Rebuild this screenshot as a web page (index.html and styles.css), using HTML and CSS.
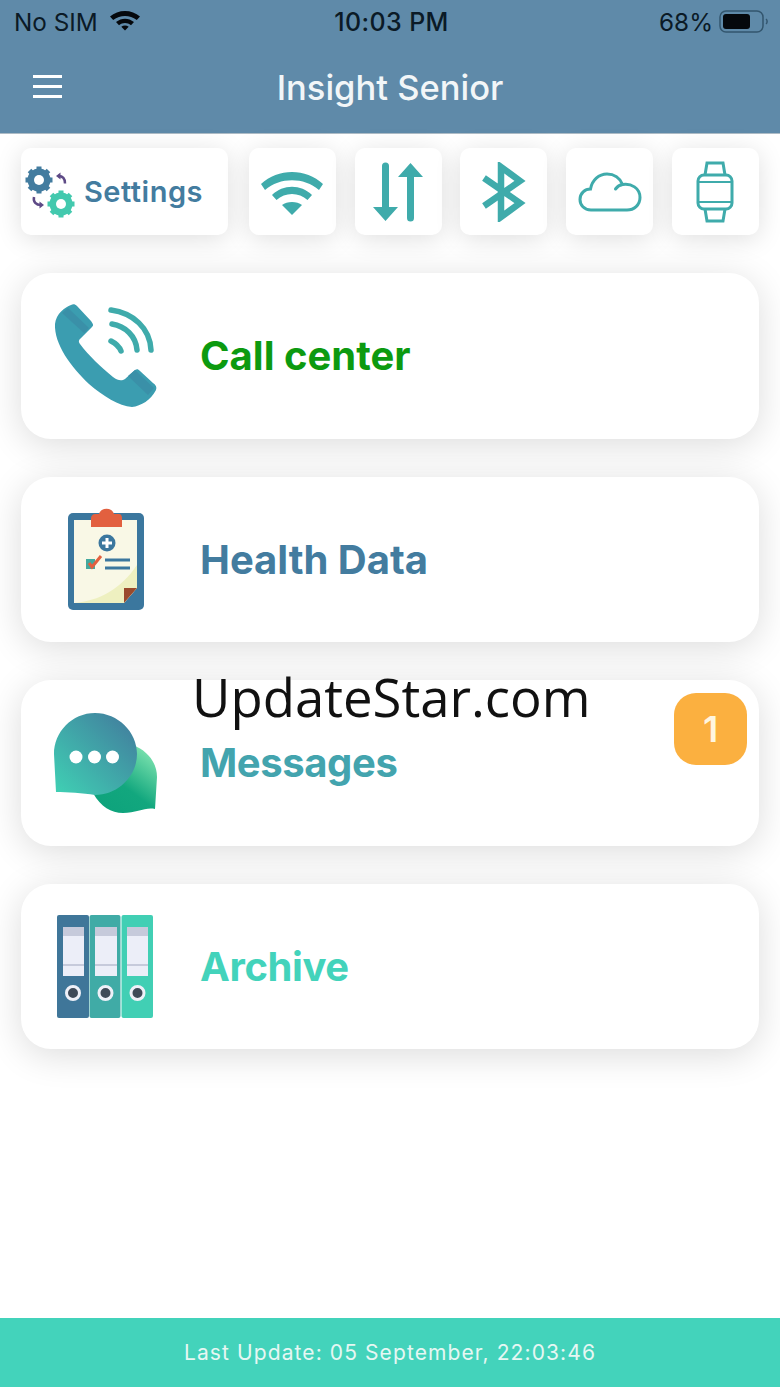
FILE: index.html
```html
<!DOCTYPE html>
<html lang="en">
<head>
<meta charset="utf-8">
<title>Insight Senior</title>
<link rel="stylesheet" href="styles.css">
</head>
<body>
<div class="screen">
  <header class="top">
    <div class="status">
      <div class="status-left">
        <span>No SIM</span>
        <svg class="sb-wifi" viewBox="0 0 32 24"><path d="M1 8.500C9 1 23 1 31 8.500L27.800 12C20.500 6.500 11.500 6.500 4.200 12Z"/><path d="M7 14C12.500 9.500 19.500 9.500 25 14L22 17.200C18.300 14.300 13.700 14.300 10 17.200Z"/><path d="M12.300 18.700C14.500 17.200 17.500 17.200 19.700 18.700L16 22.500Z"/></svg>
      </div>
      <div class="status-time">10:03 PM</div>
      <div class="status-right">
        <span>68%</span>
        <svg class="sb-batt" viewBox="0 0 50 26"><rect x="1" y="2" width="43" height="21" rx="6" fill="none" stroke="#33566e" stroke-width="1.500"/><rect x="4" y="5" width="27" height="15" rx="3" fill="#05080c"/><path d="M47 10c1.500 1 1.500 4 0 5" fill="none" stroke="#33566e" stroke-width="1.500"/></svg>
      </div>
    </div>
    <div class="navbar">
      <div class="burger"><i></i><i></i><i></i></div>
      <h1 class="title">Insight Senior</h1>
    </div>
  </header>

  <main class="content">
    <div class="tools">
      <div class="tool tool-wide">
        <svg class="ic-settings" viewBox="0 0 52 52">
          <g fill="#437c9f"><circle cx="15" cy="14" r="11.500"/><g stroke="#437c9f" stroke-width="5"><path d="M15 0.500v27M1.500 14h27M5.500 4.500l19 19M24.500 4.500l-19 19"/></g></g>
          <circle cx="15" cy="14" r="5" fill="#fff"/>
          <g fill="#43c9ae"><circle cx="37" cy="38" r="11.500"/><g stroke="#43c9ae" stroke-width="5"><path d="M37 24.500v27M23.500 38h27M27.500 28.500l19 19M46.500 28.500l-19 19"/></g></g>
          <circle cx="37" cy="38" r="5" fill="#fff"/>
          <path d="M41 17.500c0-5-2.500-7.500-6.500-7.500" fill="none" stroke="#5e4a86" stroke-width="2.500"/><path d="M32 10l4.500-3.500v7z" fill="#5e4a86"/>
          <path d="M10 31c-1 5 2 8 7 8" fill="none" stroke="#5e4a86" stroke-width="2.500"/><path d="M20 39l-4.500 3.500v-7z" fill="#5e4a86"/>
        </svg>
        <span class="tool-label">Settings</span>
      </div>
      <div class="tool">
        <svg class="ic" viewBox="0 0 64 46" fill="#3fabab"><path d="M1 15C18-1 46-1 63 15L59 21C44 8 20 8 5 21Z"/><path d="M12 26C23 15 41 15 52 26L47.500 31C39 23 25 23 16.500 31Z"/><path d="M22 36C27 32 37 32 42 36L32 46Z"/></svg>
      </div>
      <div class="tool">
        <svg class="ic ic-arrows" viewBox="0 0 52 60" fill="#3fabab"><path d="M13.500 59L26 45H17V4a3.500 3.500 0 0 0-7 0V45H1Z"/><path d="M38.500 1L51 15H42V56a3.500 3.500 0 0 1-7 0V15H26Z"/></svg>
      </div>
      <div class="tool">
        <svg class="ic ic-bt" viewBox="0 0 44 60" fill="none" stroke="#3fabab" stroke-width="6.500"><path d="M2 16L38 41L19 55V5L38 19L2 44"/></svg>
      </div>
      <div class="tool">
        <svg class="ic ic-cloud" viewBox="0 0 64 40" fill="none" stroke="#3fabab" stroke-width="3" stroke-linecap="round"><path d="M13 38C6 38 2 33 2 27.500C2 21 7 17 12.500 17C14 8 21 2 29 2C36 2 42 6 44.500 12.500C53 11 62 16 62 25.500C62 33 56 38 49 38Z"/><path d="M44.500 12.500C41 13 39 15 37.500 17"/></svg>
      </div>
      <div class="tool">
        <svg class="ic ic-watch" viewBox="0 0 38 62" fill="none" stroke="#3fabab" stroke-width="3"><path d="M9 14L11 2H27L29 14M9 48L11 60H27L29 48"/><rect x="2" y="14" width="34" height="34" rx="6"/><path d="M2 21H36M2 41H36" stroke-width="2"/></svg>
      </div>
    </div>

    <section class="card">
      <svg class="card-ic" viewBox="0 0 104 104">
        <path d="M18 1C12 3 3 10 2 20C1 40 18 63 36 80C50 92 66 102 79 103C88 102 98 96 103 86C104 83 103 81 100 79L87 67C85 65 84 65 82 66L72 75C69 77 65 77 60 73C47 62 36 52 27 40C25 37 26 36 28 34L39 23C41 21 40 20 38 17L24 2C22 0 20 0 18 1Z" fill="#3b9db0"/>
        <path d="M15 4L36 24L31 29L9 9ZM75 72L82 66L101 84L95 91Z" fill="#3a90a8"/>
        <g fill="none" stroke="#3fabab" stroke-width="5.500" stroke-linecap="round"><path d="M58 6C80 9 97 24 98 46"/><path d="M59 20C72 22 83 32 84 46"/><path d="M58 37C62 39 66 42 68 47"/></g>
      </svg>
      <span class="card-label c-green">Call center</span>
    </section>

    <section class="card">
      <svg class="card-ic" viewBox="0 0 104 104">
        <rect x="15" y="6" width="76" height="97" rx="5" fill="#3b779e"/>
        <path d="M21 13H84V81L71 96H21Z" fill="#f9f8e6"/>
        <path d="M21 96C46 94 68 82 84 58V81L71 96Z" fill="#eef0c0"/>
        <path d="M71 96V81H84Z" fill="#9a4a2c"/>
        <path d="M42 7H46C48 0 59 0 61 7H66C68 7 69 9 69 11V20H38V11C38 9 40 7 42 7Z" fill="#e2603f"/>
        <circle cx="54" cy="36" r="8.500" fill="#3b779e"/><path d="M54 31V41M49 36H59" stroke="#fff" stroke-width="3"/>
        <rect x="33" y="52" width="9" height="10" fill="#43a99e"/><path d="M36 56L39 60L48 49" fill="none" stroke="#e2603f" stroke-width="3"/>
        <path d="M52 53H77M52 61H77" stroke="#3b779e" stroke-width="3"/>
      </svg>
      <span class="card-label c-steel">Health Data</span>
    </section>

    <section class="card">
      <svg class="card-ic" viewBox="0 0 104 104">
        <defs>
          <linearGradient id="g1" x1="0" y1="1" x2="1" y2="0"><stop offset="0" stop-color="#3fd2b4"/><stop offset="1" stop-color="#42789c"/></linearGradient>
          <linearGradient id="g2" x1="1" y1="0" x2="0.300" y2="1"><stop offset="0.100" stop-color="#7fe4b0"/><stop offset=".65" stop-color="#12a77e"/><stop offset="1" stop-color="#0ea37c"/></linearGradient>
        </defs>
        <path d="M80 34C95 40 104 52 104 66L102 98C92 96 84 102 70 102C58 102 48 96 40 82Z" fill="url(#g2)"/>
        <path d="M42 2C65 2 84 21 84 43C84 65 65 84 42 84C30 82 14 81 3 81L2 62L1 43C1 21 19 2 42 2Z" fill="url(#g1)"/>
        <circle cx="23" cy="46" r="6.500" fill="#fff"/><circle cx="41.500" cy="46" r="6.500" fill="#fff"/><circle cx="59.500" cy="46" r="6.500" fill="#fff"/>
      </svg>
      <span class="card-label c-teal">Messages</span>
      <span class="badge">1</span>
    </section>

    <section class="card">
      <svg class="card-ic" viewBox="0 0 104 104">
        <rect x="4" y="1" width="32" height="103" rx="2" fill="#3f7699"/>
        <rect x="36.500" y="1" width="31" height="103" rx="2" fill="#40aba6"/>
        <rect x="68.500" y="1" width="31.500" height="103" rx="2" fill="#41cfb4"/>
        <g fill="#eceef8"><rect x="10" y="13" width="21" height="49"/><rect x="42" y="13" width="22" height="49"/><rect x="74" y="13" width="21" height="49"/></g>
        <g fill="#c6cadb"><rect x="10" y="13" width="21" height="9"/><rect x="42" y="13" width="22" height="9"/><rect x="74" y="13" width="21" height="9"/><rect x="10" y="50" width="21" height="2"/><rect x="42" y="50" width="22" height="2"/><rect x="74" y="50" width="21" height="2"/></g>
        <g fill="#3f4a58" stroke="#eef0f8" stroke-width="3"><circle cx="20" cy="79" r="6.500"/><circle cx="52.500" cy="79" r="6.500"/><circle cx="84.500" cy="79" r="6.500"/></g>
      </svg>
      <span class="card-label c-mint">Archive</span>
    </section>
  </main>

  <footer class="foot">Last Update: 05 September, 22:03:46</footer>
  <div class="watermark">UpdateStar.com</div>
</div>
</body>
</html>
```
FILE: styles.css
```css
* { box-sizing: border-box; }
html, body { margin: 0; padding: 0; }
body { font-family: "Inter", "Liberation Sans", sans-serif; background: #fff; }
.screen { position: relative; width: 780px; height: 1387px; display: flex; flex-direction: column; overflow: hidden; background: #fff; }

.top { height: 134px; background: #5f8aa9; border-bottom: 1px solid #aebcc6; flex: none; }
.status { height: 44px; padding: 0 11px 0 14px; display: grid; grid-template-columns: 1fr auto 1fr; align-items: center; color: #0b1a26; font-size: 24.300px; }
.status-left { display: flex; align-items: center; gap: 11px; }
.sb-wifi { width: 32px; height: 24px; fill: #05080c; margin-top: -4px; }
.status-time { font-weight: 500; font-size: 25px; letter-spacing: 0.4px; }
.status-right { display: flex; align-items: center; justify-content: flex-end; gap: 6px; }
.sb-batt { width: 50px; height: 26px; }

.navbar { position: relative; height: 89px; display: flex; align-items: center; justify-content: center; }
.burger { position: absolute; left: 33px; top: 31px; width: 29px; display: flex; flex-direction: column; gap: 7px; }
.burger i { display: block; height: 3px; background: #fff; }
.title { margin: 0 0 3px; font-size: 34.500px; font-weight: 500; color: #f2f6f8; }

.content { flex: 1; padding: 14px 21px 0; display: flex; flex-direction: column; gap: 38px; }
.tools { display: flex; justify-content: space-between; height: 87px; }
.tool { width: 87px; height: 87px; background: #fff; border-radius: 10px; box-shadow: 0 4px 26px rgba(0,0,0,.13); display: flex; align-items: center; justify-content: center; }
.tool-wide { width: 207px; margin-right: 2px; justify-content: flex-start; padding-left: 3px; gap: 8px; }
.tool-label { font-size: 29px; font-weight: 600; letter-spacing: 0.5px; color: #437c9f; }
.ic-settings { width: 52px; height: 52px; }
.ic { width: 64px; height: 46px; }
.ic-arrows { width: 52px; height: 60px; }
.ic-bt { width: 44px; height: 60px; }
.ic-cloud { width: 64px; height: 40px; }
.ic-watch { width: 38px; height: 62px; }

.card { position: relative; height: 165.500px; background: #fff; border-radius: 30px; box-shadow: 0 6px 36px rgba(0,0,0,.14); display: flex; align-items: center; padding-left: 32px; }
.card-ic { width: 104px; height: 104px; flex: none; }
.card-label { margin-left: 43px; font-size: 40px; font-weight: 700; }
.c-green { color: #0c9a10; }
.c-steel { color: #437c9f; }
.c-teal { color: #43a4ae; letter-spacing: -0.4px; }
.c-mint { color: #43d3bb; letter-spacing: -0.4px; }
.badge { position: absolute; right: 12px; top: 13px; width: 73px; height: 72px; border-radius: 22px; background: #fbb040; color: #fff6e0; font-size: 36px; font-weight: 600; display: flex; align-items: center; justify-content: center; }

.foot { flex: none; height: 69px; background: #43d3bb; color: #e6f7f3; font-size: 21px; letter-spacing: 1.100px; display: flex; align-items: center; justify-content: center; }

.watermark { position: absolute; left: 192px; top: 660px; font-family: "Open Sans", "Noto Sans", sans-serif; font-size: 52.700px; line-height: 74px; color: #111; }
```
